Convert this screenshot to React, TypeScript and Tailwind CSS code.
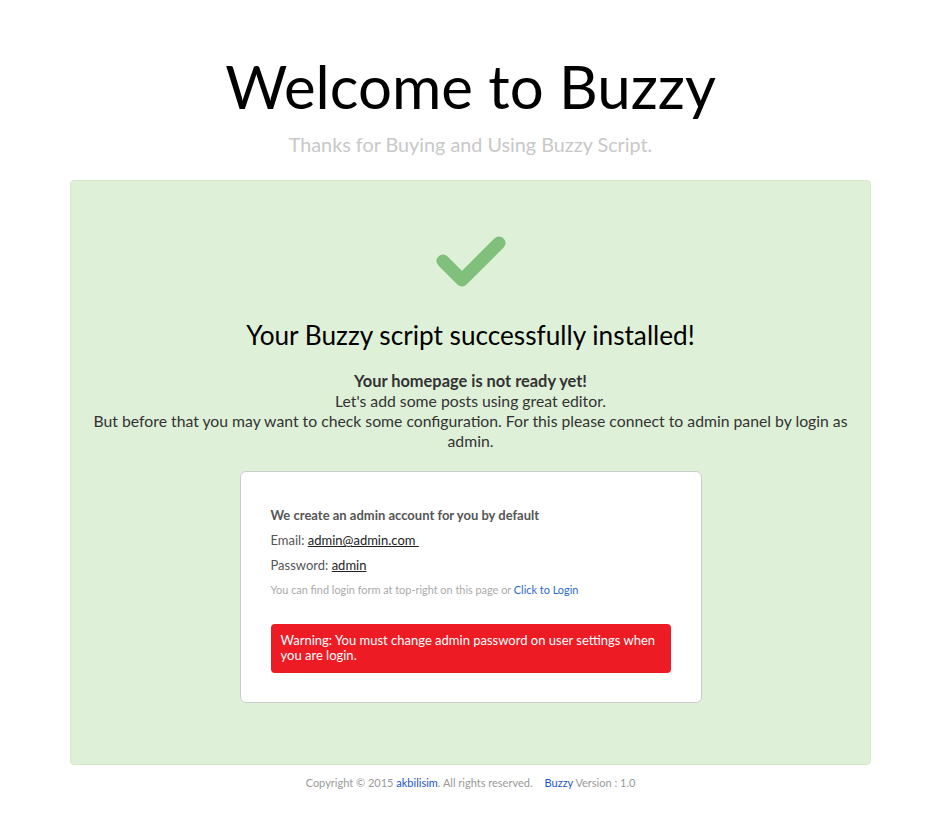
export default function App() {
  return (
    <div className="min-h-[838px] bg-white font-['Lato','Liberation_Sans',sans-serif] text-[#333] pl-[11px]">
      <div className="w-[801px] mx-auto pt-[50px]">
        <h1 className="text-center text-[60px] leading-[72px] text-black">Welcome to Buzzy</h1>
        <p className="text-center text-[19.8px] leading-[28px] text-[#c8c8c8] mt-[8px]">
          Thanks for Buying and Using Buzzy Script.
        </p>

        <div className="mt-[22px] h-[585px] bg-[#dff0d8] border border-[#d6e9c6] rounded-[4px] pt-[52px] flex flex-col items-center">
          <svg width="72" height="56" viewBox="0 0 72 56" className="block">
            <path
              d="M8 28 L27 47 L64 10"
              fill="none"
              stroke="#80bf7c"
              strokeWidth="13"
              strokeLinecap="round"
              strokeLinejoin="round"
            />
          </svg>

          <h2 className="mt-[29px] text-[26.2px] leading-[34px] text-black">
            Your Buzzy script successfully installed!
          </h2>

          <div className="mt-[19px] text-center text-[15.75px] leading-[20px] text-[#333] px-[20px]">
            <div className="font-bold text-[16.4px]">Your homepage is not ready yet!</div>
            <div>Let's add some posts using great editor.</div>
            <div>
              But before that you may want to check some configuration. For this please connect to admin panel by login as admin.
            </div>
          </div>

          <div className="mt-[20px] w-[462px] bg-white border border-[#ccc] rounded-[6px] px-[30px] pt-[34px] pb-[29px] text-[13px] text-[#555]">
            <div className="font-bold leading-[18px]">We create an admin account for you by default</div>
            <div className="mt-[7px] leading-[18px]">
              Email: <a className="text-[#222] underline">admin@admin.com&nbsp;</a>
            </div>
            <div className="mt-[7px] leading-[18px]">
              Password: <a className="text-[#222] underline">admin</a>
            </div>
            <div className="mt-[7px] leading-[18px] text-[10.9px] text-[#aaa]">
              You can find login form at top-right on this page or{" "}
              <a className="text-[#2a6acd]">Click to Login</a>
            </div>
            <div className="mt-[25px] bg-[#ed1c24] text-white rounded-[4px] px-[10px] pt-[9px] pb-[10px] text-[13px] leading-[15px]">
              Warning: You must change admin password on user settings when you are login.
            </div>
          </div>
        </div>

        <div className="mt-[10px] text-center text-[11px] text-[#999]">
          Copyright © 2015 <a className="text-[#1a56c8]">akbilisim</a>. All rights reserved.
          <span className="inline-block w-[12px]"></span>
          <a className="text-[#1a56c8]">Buzzy</a> Version : 1.0
        </div>
      </div>
    </div>
  );
}
